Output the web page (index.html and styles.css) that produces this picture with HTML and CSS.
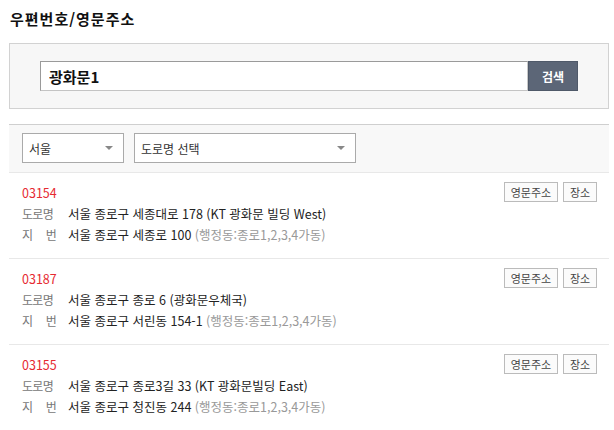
FILE: index.html
```html
<!DOCTYPE html>
<html lang="ko">
<head>
    <meta charset="UTF-8">
    <meta name="viewport" content="width=device-width, initial-scale=1.0">
    <title>우편번호/영문주소</title>
    <link rel="stylesheet" href="styles.css">
</head>
<body>
    <div class="wrap">
        <h1 class="page-title">우편번호/영문주소</h1>

        <div class="search-panel">
            <div class="search-row">
                <input type="text" class="search-input" value="광화문1">
                <button class="search-btn">검색</button>
            </div>
        </div>

        <div class="filter-panel">
            <div class="select select-city">
                <span class="select-text">서울</span>
                <span class="select-arrow"></span>
            </div>
            <div class="select select-road">
                <span class="select-text">도로명 선택</span>
                <span class="select-arrow"></span>
            </div>
        </div>

        <ul class="result-list">
            <li class="result-item">
                <div class="result-info">
                    <div class="zipcode">03154</div>
                    <div class="addr-row">
                        <span class="addr-label">도로명</span>
                        <span class="addr-value">서울 종로구 세종대로 178 (KT 광화문 빌딩 West)</span>
                    </div>
                    <div class="addr-row">
                        <span class="addr-label">지 번</span>
                        <span class="addr-value">서울 종로구 세종로 100 <span class="addr-sub">(행정동:종로1,2,3,4가동)</span></span>
                    </div>
                </div>
                <div class="result-actions">
                    <button class="small-btn btn-eng">영문주소</button>
                    <button class="small-btn btn-place">장소</button>
                </div>
            </li>
            <li class="result-item">
                <div class="result-info">
                    <div class="zipcode">03187</div>
                    <div class="addr-row">
                        <span class="addr-label">도로명</span>
                        <span class="addr-value">서울 종로구 종로 6 (광화문우체국)</span>
                    </div>
                    <div class="addr-row">
                        <span class="addr-label">지 번</span>
                        <span class="addr-value">서울 종로구 서린동 154-1 <span class="addr-sub">(행정동:종로1,2,3,4가동)</span></span>
                    </div>
                </div>
                <div class="result-actions">
                    <button class="small-btn btn-eng">영문주소</button>
                    <button class="small-btn btn-place">장소</button>
                </div>
            </li>
            <li class="result-item">
                <div class="result-info">
                    <div class="zipcode">03155</div>
                    <div class="addr-row">
                        <span class="addr-label">도로명</span>
                        <span class="addr-value">서울 종로구 종로3길 33 (KT 광화문빌딩 East)</span>
                    </div>
                    <div class="addr-row">
                        <span class="addr-label">지 번</span>
                        <span class="addr-value">서울 종로구 청진동 244 <span class="addr-sub">(행정동:종로1,2,3,4가동)</span></span>
                    </div>
                </div>
                <div class="result-actions">
                    <button class="small-btn btn-eng">영문주소</button>
                    <button class="small-btn btn-place">장소</button>
                </div>
            </li>
        </ul>
    </div>
</body>
</html>
```

FILE: styles.css
```css
* {
    margin: 0;
    padding: 0;
    box-sizing: border-box;
}

body {
    font-family: "Noto Sans CJK KR", "Noto Sans", sans-serif;
    font-size: 12px;
    color: #222;
    background: #fff;
}

.wrap {
    width: 600px;
    margin-left: 9px;
}

.page-title {
    font-size: 15px;
    font-weight: bold;
    line-height: 20px;
    letter-spacing: 1px;
    color: #111;
    margin: 9px 0 14px 1px;
}

/* search box */
.search-panel {
    background: #f7f7f7;
    border: 1px solid #d2d2d2;
    padding: 17px 30px;
}

.search-row {
    display: flex;
    height: 30px;
}

.search-input {
    flex: 1;
    height: 30px;
    border: 1px solid;
    border-color: #9a9a9a #c8c8c8 #c4c4c4 #9a9a9a;
    padding: 0 8px;
    font-family: inherit;
    font-size: 15px;
    font-weight: bold;
    color: #111;
    outline: none;
    background: #fff;
}

.search-btn {
    width: 50px;
    height: 30px;
    background: #5c6677;
    border: 1px solid #4f5969;
    color: #fff;
    font-family: inherit;
    font-size: 12px;
    font-weight: bold;
}

/* filters */
.filter-panel {
    margin-top: 15px;
    background: #f8f8f8;
    border-top: 1px solid #cfcfcf;
    padding: 8px 13px 9px;
    display: flex;
    gap: 10px;
}

.select {
    height: 30px;
    background: #fff;
    border: 1px solid #aaa;
    display: flex;
    align-items: center;
    justify-content: space-between;
    padding: 0 10px 0 6px;
    color: #333;
}

.select-city {
    width: 102px;
}

.select-road {
    width: 222px;
}

.select-arrow {
    width: 0;
    height: 0;
    border-left: 4px solid transparent;
    border-right: 4px solid transparent;
    border-top: 4px solid #888;
}

/* results */
.result-list {
    list-style: none;
}

.result-item {
    display: flex;
    justify-content: space-between;
    align-items: flex-start;
    border-top: 1px solid #e8e8e8;
    padding: 9px 12px 13px 13px;
}

.zipcode,
.addr-row {
    line-height: 21px;
    height: 21px;
}

.zipcode {
    color: #e62a31;
    font-size: 12.5px;
}

.addr-row {
    display: flex;
    font-size: 12.5px;
}

.addr-label {
    width: 34px;
    margin-right: 12px;
    font-size: 12px;
    letter-spacing: -0.7px;
    color: #777;
    text-align: justify;
    text-align-last: justify;
    white-space: nowrap;
}

.addr-value {
    color: #222;
    white-space: pre;
}

.addr-sub {
    color: #999;
}

.result-actions {
    display: flex;
    gap: 5px;
}

.small-btn {
    height: 20px;
    background: #fbfbfb;
    border: 1px solid #bbb;
    font-family: inherit;
    font-size: 11px;
    color: #444;
    line-height: 18px;
}

.btn-eng {
    width: 54px;
}

.btn-place {
    width: 34px;
}
```
